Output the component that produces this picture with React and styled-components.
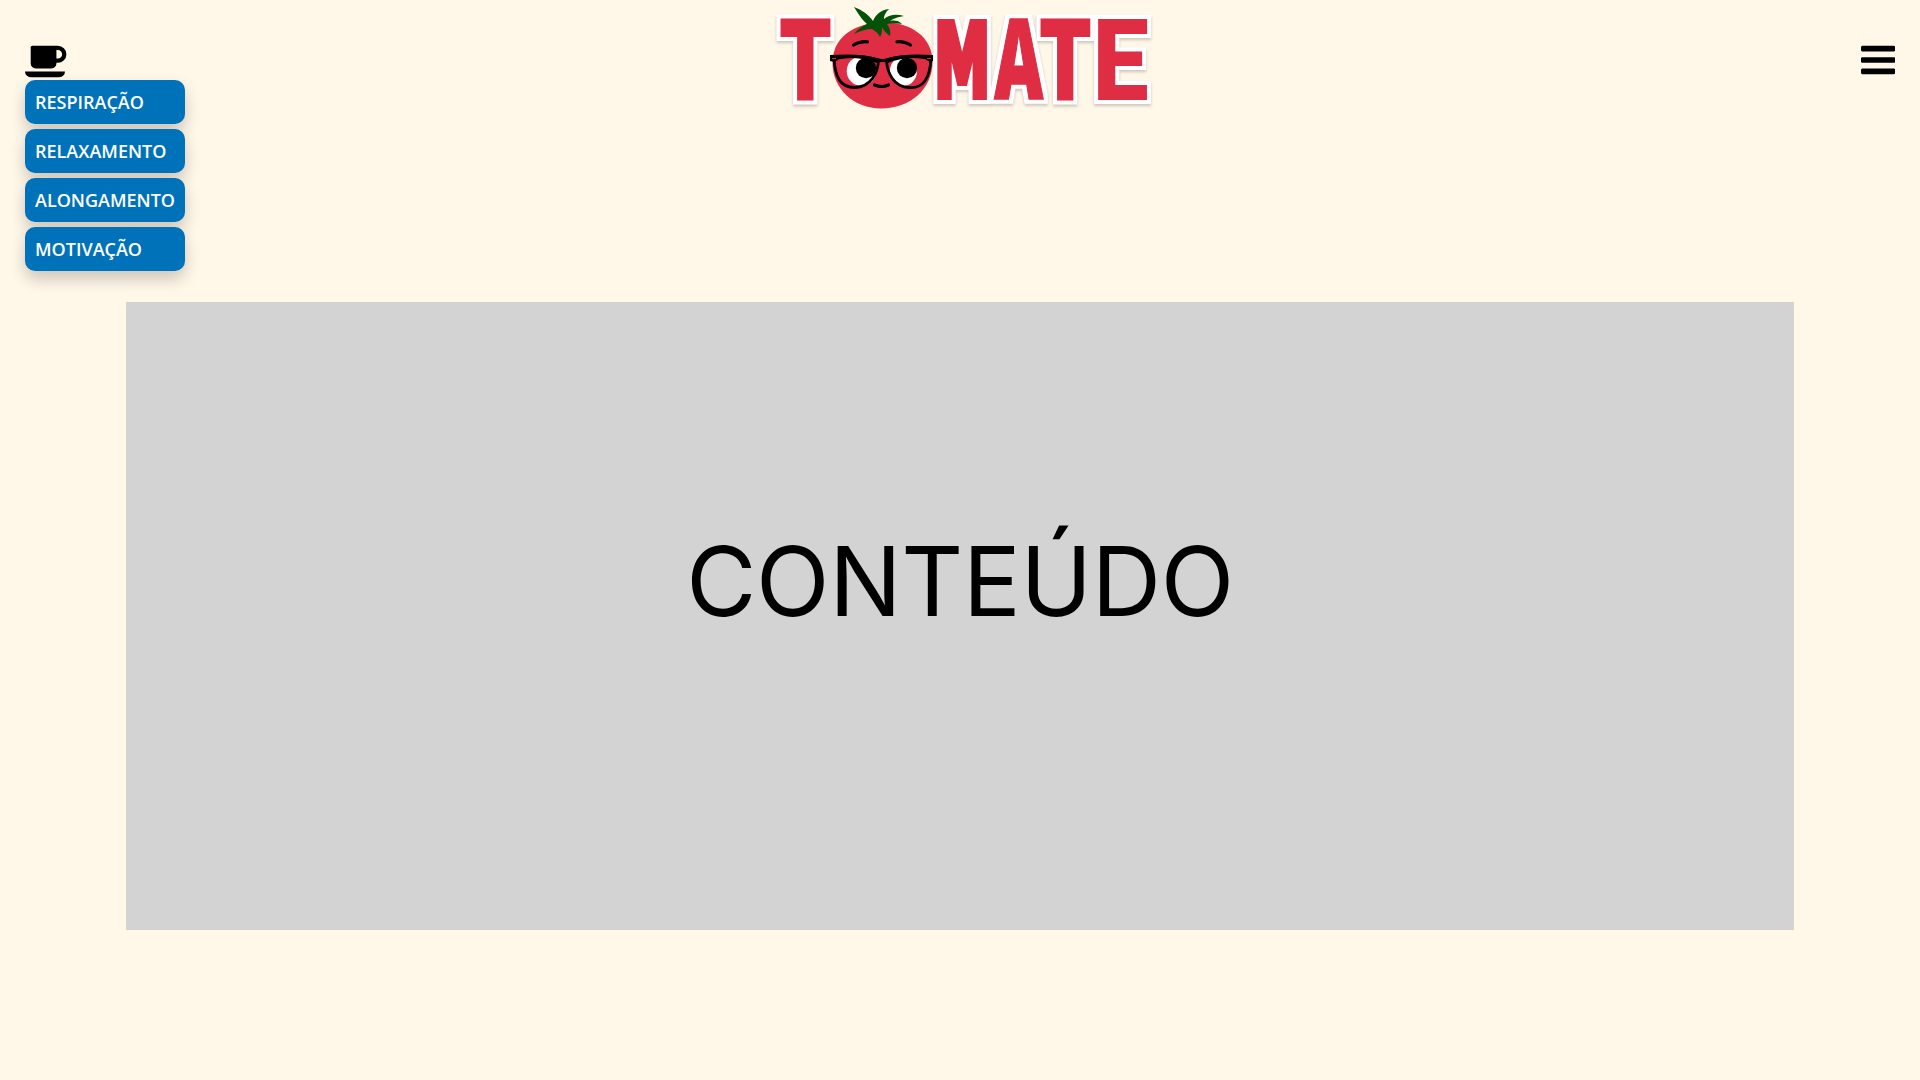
import React from 'react';
import styled, { createGlobalStyle } from 'styled-components';

const GlobalStyle = createGlobalStyle`
  * { box-sizing: border-box; }
  body {
    margin: 0;
    background: #fff7e8;
    color: #000;
    font-family: Inter, sans-serif;
  }
`;

const Page = styled.div`
  min-height: 100vh;
  display: flex;
  flex-direction: column;
`;

const Header = styled.header`
  height: 120px;
  padding: 0 25px;
  display: flex;
  align-items: center;
  justify-content: space-between;
`;

const Break = styled.nav`
  position: relative;
  display: flex;
`;

const IconButton = styled.button`
  display: flex;
  padding: 0;
  border: 0;
  background: none;
  color: #000;
  cursor: pointer;
`;

const Icon = styled.svg`
  display: block;
  height: 40px;
  fill: currentColor;
`;

const Menu = styled.ul`
  position: absolute;
  top: 100%;
  left: 0;
  margin: 0;
  padding: 0;
  list-style: none;
  display: flex;
  flex-direction: column;
  gap: 5px;
  width: 160px;
`;

const MenuItem = styled.li`
  height: 44px;
  padding: 0 10px;
  display: flex;
  align-items: center;
  border-radius: 10px;
  background: #0072b9;
  color: #fff;
  font: 600 18px 'Open Sans', sans-serif;
  box-shadow: 0 8px 16px rgba(0, 0, 0, 0.2);
`;

const LogoSvg = styled.svg`
  display: block;
  width: 388.6px;
  height: 120px;
  overflow: visible;
`;

const Glyph = styled.text`
  font-family: '${(p) => p.$family}', sans-serif;
  font-weight: ${(p) => p.$weight};
  font-size: 100px;
  fill: #df2e43;
  stroke: #df2e43;
  stroke-width: ${(p) => p.$bold}px;
  stroke-miterlimit: 3;
`;

const Main = styled.main`
  display: flex;
  flex-direction: column;
  padding: 182px 126px 0;
`;

const Content = styled.section`
  height: 628px;
  padding-bottom: 70px;
  display: flex;
  align-items: center;
  justify-content: center;
  background: #d3d3d3;
  font-size: 96px;
  letter-spacing: -0.25px;
`;

// Ink bounds of each capital at 100px, used to fit it to its slot in the logo.
const GLYPHS = {
  T: { family: 'Roboto', weight: 900, left: 1.4, right: 61.6, cap: 71.1 },
  M: { family: 'DejaVu Sans', weight: 700, left: 9.2, right: 90.3, cap: 72.9 },
  A: { family: 'Open Sans', weight: 800, left: 0, right: 73, cap: 71.4 },
  E: { family: 'Roboto', weight: 900, left: 4.7, right: 54.8, cap: 71.1 },
};

const LETTERS = [
  { char: 'T', x: 10.3, width: 50.5, bold: 3.5 },
  { char: 'M', x: 167.3, width: 49.5, bold: 8 },
  { char: 'A', x: 223.7, width: 50.3, bold: 1.5 },
  { char: 'T', x: 270.2, width: 50.3, bold: 3.5 },
  { char: 'E', x: 327.5, width: 50, bold: 0 },
];

function Letter({ char, x, width, bold }) {
  const { family, weight, left, right, cap } = GLYPHS[char];
  const sx = width / (right - left + bold);
  const sy = 81 / (cap + bold);
  const tx = x - (left - bold / 2) * sx;
  const ty = 100.3 - (bold / 2) * sy;
  return (
    <Glyph
      $family={family}
      $weight={weight}
      $bold={bold}
      transform={`translate(${tx} ${ty}) scale(${sx} ${sy})`}
    >
      {char}
    </Glyph>
  );
}

function Logo() {
  return (
    <LogoSvg viewBox="0 0 388.6 120" role="img" aria-label="Tomate">
      <defs>
        <filter id="sticker" filterUnits="userSpaceOnUse" x="0" y="0" width="388" height="120" colorInterpolationFilters="sRGB">
          <feMorphology in="SourceAlpha" operator="dilate" radius="4" result="grown" />
          <feFlood floodColor="#fff" />
          <feComposite in2="grown" operator="in" result="outline" />
          <feGaussianBlur in="grown" stdDeviation="1.8" />
          <feOffset dy="2.500" result="soft" />
          <feFlood floodColor="#000" floodOpacity="0.2" />
          <feComposite in2="soft" operator="in" result="shade" />
          <feMerge>
            <feMergeNode in="shade" />
            <feMergeNode in="outline" />
            <feMergeNode in="SourceGraphic" />
          </feMerge>
        </filter>
      </defs>
      <g filter="url(#sticker)">
        {LETTERS.map((letter) => <Letter key={letter.x} {...letter} />)}
      </g>
      <g transform="translate(50 0)">
        <path fill="#df2e43" d="M62 22C42 23 12.500 32 12.500 63C12.500 89 34 108.500 61 108.500C90 108.500 112.500 89 112.500 62C112.500 37 91 22 62 22Z" />
        <path fill="#045208" d="M34 7C42 10 49 15 53 21C56 14 61 10 69 9C65 13 64 16 64 19C70 14 77 14 84 16C77 17 73 19 70 21C75 20 79 21 82 24C76 23 71 23 67 24C70 28 71 32 70 36C66 33 63 30 62 27C62 31 62 34 60 37C58 33 55 31 52 29C46 29 40 31 34 34C38 29 42 26 47 24C41 19 38 13 34 7Z" />
        <g fill="none" stroke="#000" strokeLinecap="round" strokeWidth="3.200">
          <path d="M33.500 45Q40 41 47.500 41.800M77 41.800Q84 41 90.500 45" />
          <path d="M54.500 85Q62 88 68.500 85" />
        </g>
        <circle cx="41.500" cy="71" r="14.800" fill="#fff" />
        <ellipse cx="83.500" cy="71" rx="13.500" ry="14.800" fill="#fff" />
        <circle cx="46" cy="68" r="10.200" />
        <circle cx="87" cy="68" r="10.200" />
        <g fill="none" stroke="#000" strokeWidth="2.800">
          <path d="M14 58C29 56 46 56 58.500 60C58 73 51 87 35 87.500C20 87.500 15 77 14 58Z" />
          <path d="M66.500 60C79 56 97 56 111 58C110 79 103 88.500 89 87.500C74 87 67 73 66.500 60Z" />
        </g>
        <path d="M10 55C28 54 44 54 57 58Q62.500 60 68 58C81 54 97 54 113 55V61L110 62L105 59C93 57 80 58 68 63Q62.500 61 57 63C45 58 32 57 20 59L14 62L10 61Z" />
        <path d="M12 58.500H16M107 58.500H111" stroke="#df2e43" strokeWidth="1" />
      </g>
    </LogoSvg>
  );
}

const CoffeeIcon = () => (
  <Icon viewBox="0 0 1920 1792" aria-hidden="true">
    <path d="M1664 640q0-80-56-136t-136-56h-64v384h64q80 0 136-56t56-136zM0 1408h1792q0 106-75 181t-181 75H256q-106 0-181-75T0 1408zm1856-768q0 159-112.500 271.500T1472 1024h-64v32q0 92-66 158t-158 66H480q-92 0-158-66t-66-158V320q0-26 19-45t45-19h1152q159 0 271.500 112.500T1856 640z" />
  </Icon>
);

const BAR = 'h1408q26 0 45 19t19 45v128q0 26-19 45t-45 19H64q-26 0-45-19t-19-45v-128q0-26 19-45t45-19z';

const BarsIcon = () => (
  <Icon viewBox="0 0 1536 1792" aria-hidden="true">
    <path d={`M64 256${BAR}M64 768${BAR}M64 1280${BAR}`} />
  </Icon>
);

const BREAKS = ['RESPIRAÇÃO', 'RELAXAMENTO', 'ALONGAMENTO', 'MOTIVAÇÃO'];

export default function App() {
  return (
    <Page>
      <GlobalStyle />
      <Header>
        <Break>
          <IconButton aria-label="Pausas"><CoffeeIcon /></IconButton>
          <Menu>
            {BREAKS.map((name) => <MenuItem key={name}>{name}</MenuItem>)}
          </Menu>
        </Break>
        <Logo />
        <IconButton aria-label="Menu"><BarsIcon /></IconButton>
      </Header>
      <Main>
        <Content>CONTEÚDO</Content>
      </Main>
    </Page>
  );
}
